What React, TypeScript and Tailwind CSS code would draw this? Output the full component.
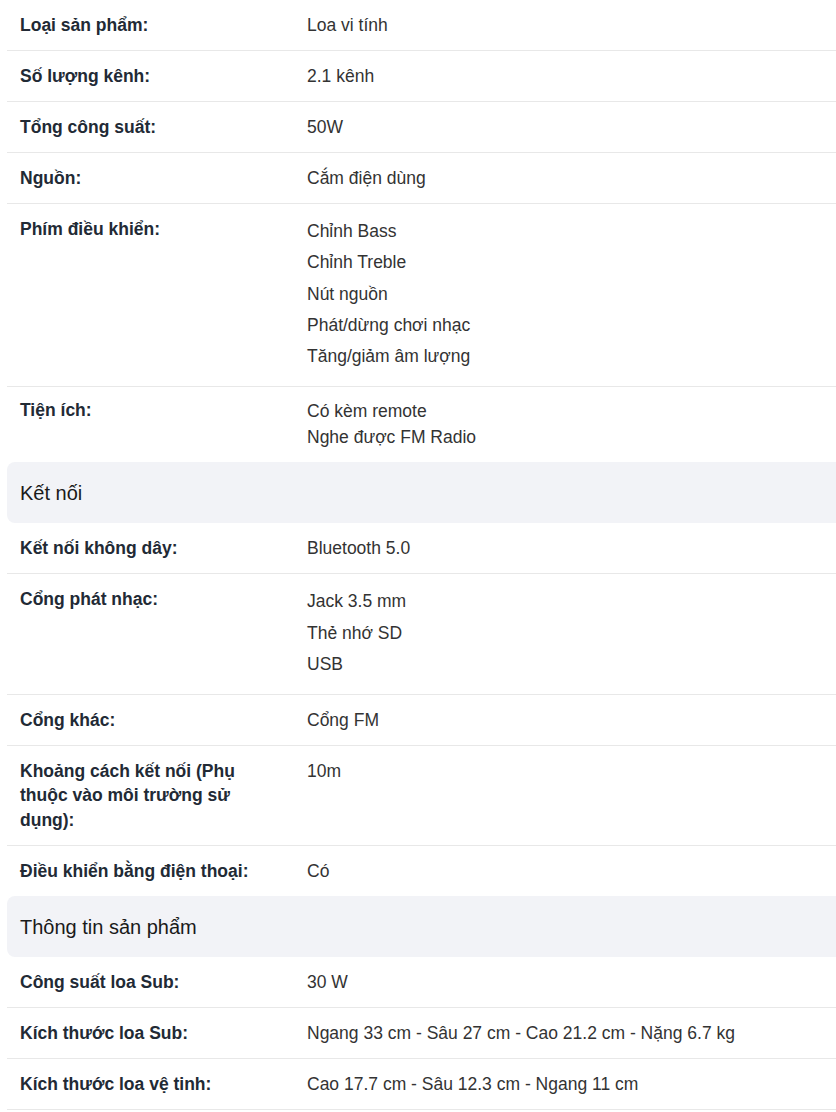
import React from "react";

/** One spec row: bold label on the left, value(s) on the right */
interface Spec {
  label: string;
  values: string[];
  /** render values as a spaced list instead of plain lines */
  list?: boolean;
}

interface Group {
  title?: string;
  specs: Spec[];
}

const groups: Group[] = [
  {
    specs: [
      { label: "Loại sản phẩm:", values: ["Loa vi tính"] },
      { label: "Số lượng kênh:", values: ["2.1 kênh"] },
      { label: "Tổng công suất:", values: ["50W"] },
      { label: "Nguồn:", values: ["Cắm điện dùng"] },
      {
        label: "Phím điều khiển:",
        values: ["Chỉnh Bass", "Chỉnh Treble", "Nút nguồn", "Phát/dừng chơi nhạc", "Tăng/giảm âm lượng"],
        list: true,
      },
      { label: "Tiện ích:", values: ["Có kèm remote", "Nghe được FM Radio"] },
    ],
  },
  {
    title: "Kết nối",
    specs: [
      { label: "Kết nối không dây:", values: ["Bluetooth 5.0"] },
      { label: "Cổng phát nhạc:", values: ["Jack 3.5 mm", "Thẻ nhớ SD", "USB"], list: true },
      { label: "Cổng khác:", values: ["Cổng FM"] },
      { label: "Khoảng cách kết nối (Phụ thuộc vào môi trường sử dụng):", values: ["10m"] },
      { label: "Điều khiển bằng điện thoại:", values: ["Có"] },
    ],
  },
  {
    title: "Thông tin sản phẩm",
    specs: [
      { label: "Công suất loa Sub:", values: ["30 W"] },
      { label: "Kích thước loa Sub:", values: ["Ngang 33 cm - Sâu 27 cm - Cao 21.2 cm - Nặng 6.7 kg"] },
      { label: "Kích thước loa vệ tinh:", values: ["Cao 17.7 cm - Sâu 12.3 cm - Ngang 11 cm"] },
    ],
  },
];

const SpecRow: React.FC<{ spec: Spec; border: boolean }> = ({ spec, border }) => {
  const multi = !spec.list && spec.values.length > 1;
  return (
    <li className={`flex ${border ? "border-b border-[#e8e8e8]" : ""}`}>
      <div
        className={`w-[300px] shrink-0 pl-[13px] pr-[40px] text-[17.5px] leading-[24.5px] font-bold text-[#222a35] ${
          multi ? "pt-[11px] pb-[12px]" : "py-[12.75px]"
        }`}
      >
        {spec.label}
      </div>
      {spec.list ? (
        <ul className="flex-1 pt-[12px] pb-[14px] text-[17.5px] text-[#333]">
          {spec.values.map(v => (
            <li key={v} className="leading-[31.25px]">
              {v}
            </li>
          ))}
        </ul>
      ) : multi ? (
        <div className="flex-1 pt-[11px] pb-[12px] text-[17.5px] leading-[26px] text-[#333]">
          {spec.values.map(v => (
            <p key={v}>{v}</p>
          ))}
        </div>
      ) : (
        <div className="flex-1 py-[12.75px] text-[17.5px] leading-[24.5px] text-[#333]">{spec.values[0]}</div>
      )}
    </li>
  );
};

export default function App() {
  return (
    <div className="w-[836px] overflow-hidden bg-white pl-[7px] font-['Liberation_Sans',Arial,sans-serif]">
      <div className="w-[860px]">
        {groups.map((group, gi) => (
          <section key={gi}>
            {/* Group header */}
            {group.title && (
              <h3 className="h-[61px] flex items-center rounded-lg bg-[#f2f3f7] pl-[13px] text-[20px] font-normal text-[#1a1a1a]">
                {group.title}
              </h3>
            )}
            <ul>
              {group.specs.map((spec, i) => (
                <SpecRow
                  key={spec.label}
                  spec={spec}
                  border={i < group.specs.length - 1 || gi === groups.length - 1}
                />
              ))}
            </ul>
          </section>
        ))}
      </div>
    </div>
  );
}
